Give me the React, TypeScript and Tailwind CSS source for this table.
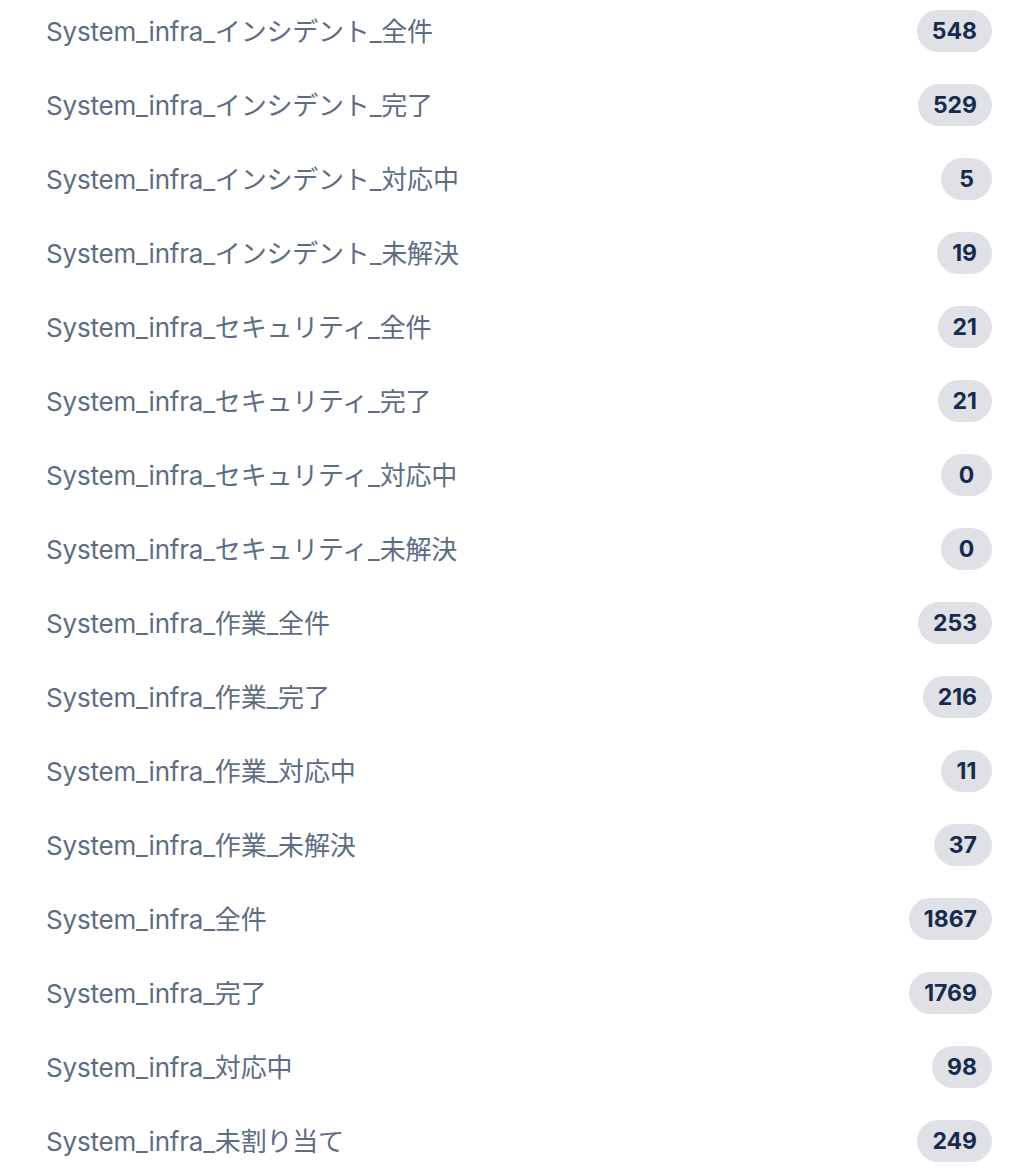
const rows: { label: string; count: number }[] = [
  { label: 'System_infra_インシデント_全件', count: 548 },
  { label: 'System_infra_インシデント_完了', count: 529 },
  { label: 'System_infra_インシデント_対応中', count: 5 },
  { label: 'System_infra_インシデント_未解決', count: 19 },
  { label: 'System_infra_セキュリティ_全件', count: 21 },
  { label: 'System_infra_セキュリティ_完了', count: 21 },
  { label: 'System_infra_セキュリティ_対応中', count: 0 },
  { label: 'System_infra_セキュリティ_未解決', count: 0 },
  { label: 'System_infra_作業_全件', count: 253 },
  { label: 'System_infra_作業_完了', count: 216 },
  { label: 'System_infra_作業_対応中', count: 11 },
  { label: 'System_infra_作業_未解決', count: 37 },
  { label: 'System_infra_全件', count: 1867 },
  { label: 'System_infra_完了', count: 1769 },
  { label: 'System_infra_対応中', count: 98 },
  { label: 'System_infra_未割り当て', count: 249 },
];

export default function App() {
  return (
    <div
      className="w-full h-[1170px] overflow-hidden bg-white"
      style={{ fontFamily: 'Inter, "Noto Sans CJK JP", sans-serif' }}
    >
      <ul className="-mt-[6px] pl-[46px] pr-[26px]">
        {rows.map((row) => (
          <li key={row.label} className="h-[74px] flex items-center justify-between">
            <span className="text-[26px] tracking-[-0.2px] text-[#5e6c84]">{row.label}</span>
            <span className="h-[42px] min-w-[51px] px-[15px] rounded-full bg-[#dfe1e6] flex items-center justify-center text-[23px] font-bold text-[#172b4d]">
              {row.count}
            </span>
          </li>
        ))}
      </ul>
    </div>
  );
}
